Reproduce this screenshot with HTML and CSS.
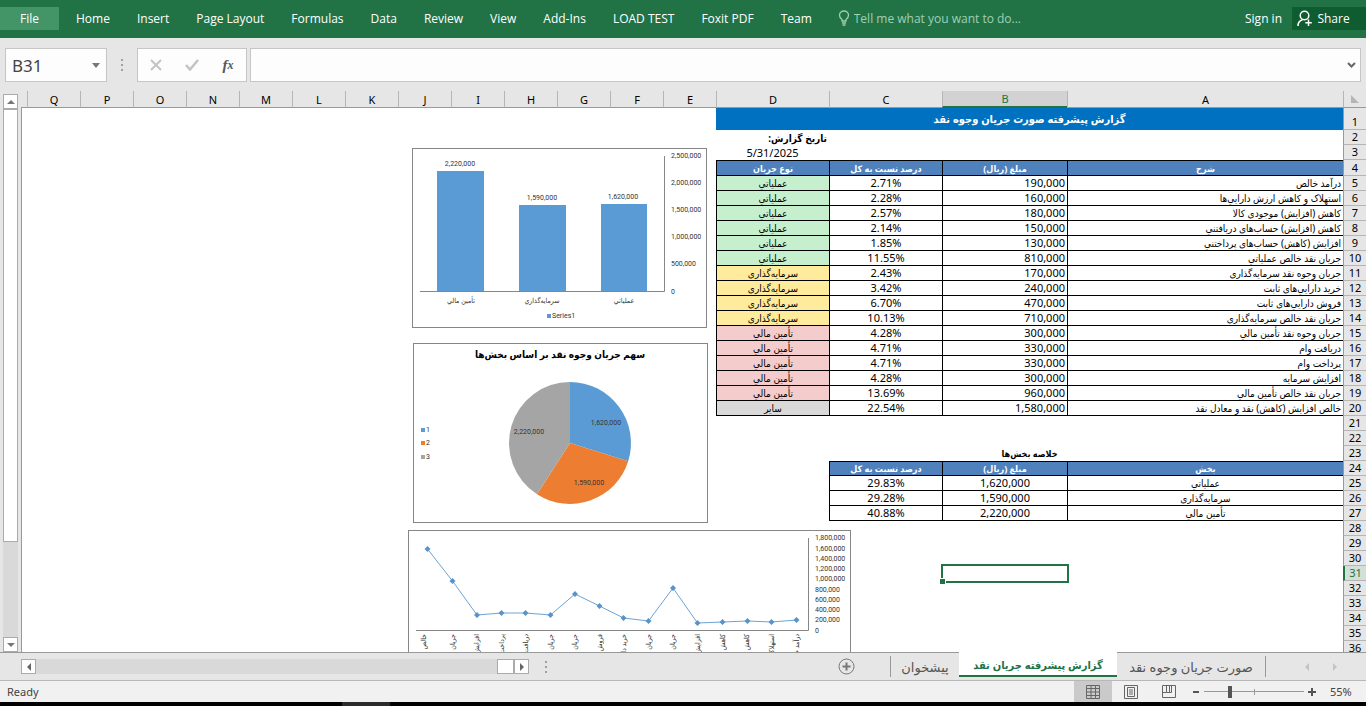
FILE: index.html
```html
<!DOCTYPE html>
<html lang="fa">
<head>
    <meta charset="UTF-8">
    <meta name="viewport" content="width=device-width, initial-scale=1.0">
    <title>گزارش پیشرفته جریان نقد</title>
    <link rel="stylesheet" href="styles.css">
</head>
<body>
    <!-- ribbon -->
    <header class="ribbon">
        <button class="file-btn">File</button>
        <nav class="ribbon-tabs">
            <a href="#">Home</a>
            <a href="#">Insert</a>
            <a href="#">Page Layout</a>
            <a href="#">Formulas</a>
            <a href="#">Data</a>
            <a href="#">Review</a>
            <a href="#">View</a>
            <a href="#">Add-Ins</a>
            <a href="#">LOAD TEST</a>
            <a href="#">Foxit PDF</a>
            <a href="#">Team</a>
        </nav>
        <label class="tell-me">
            <svg width="12" height="16" viewBox="0 0 12 16" fill="none" stroke="#9fd0b3" stroke-width="1.3">
                <path d="M4 11V9.500C2.500 8.500 1.500 7.200 1.500 5.300a4.500 4.300 0 0 1 9 0C10.500 7.200 9.500 8.500 8 9.500V11z"/>
                <path d="M4 13h4M4.500 15h3"/>
            </svg>
            <input type="text" placeholder="Tell me what you want to do..." aria-label="Tell me what you want to do">
        </label>
        <a class="sign-in" href="#">Sign in</a>
        <button class="share-btn">
            <svg width="16" height="17" viewBox="0 0 16 17" fill="none" stroke="#fff" stroke-width="1.500">
                <circle cx="7.500" cy="5.500" r="4.300"/>
                <path d="M1 16c0-3.500 1.800-5.500 4.500-6.300M11.500 9.500v6.500M8.300 12.800h6.500"/>
            </svg>
            Share
        </button>
    </header>

    <!-- formula bar -->
    <div class="formula-bar">
        <div class="name-box">
            <input type="text" value="B31" aria-label="Name box">
            <button aria-label="Open name list"><svg width="8" height="5" viewBox="0 0 8 5"><path d="M0 0h8L4 5z" fill="#777"/></svg></button>
        </div>
        <div class="dots"><i></i><i></i><i></i></div>
        <div class="fx-box">
            <button aria-label="Cancel"><svg width="12" height="12" viewBox="0 0 12 12"><path d="M1 1l10 10M11 1L1 11" stroke="#c3c3c3" stroke-width="2"/></svg></button>
            <button aria-label="Enter"><svg width="14" height="12" viewBox="0 0 14 12"><path d="M1 6l4 4.500L13 1" fill="none" stroke="#c3c3c3" stroke-width="2.500"/></svg></button>
            <button class="fx" aria-label="Insert function">f<sub>x</sub></button>
        </div>
        <div class="formula-input">
            <input type="text" aria-label="Formula">
            <button aria-label="Expand"><svg width="9" height="6" viewBox="0 0 9 6"><path d="M1 1l3.500 3.500L8 1" fill="none" stroke="#666" stroke-width="2"/></svg></button>
        </div>
    </div>

    <main class="workspace">
        <div class="v-scroll">
            <button aria-label="Scroll up"><svg width="8" height="4" viewBox="0 0 8 4"><path d="M0 4h8L4 0z" fill="#777"/></svg></button>
            <div class="v-thumb"></div>
            <div class="v-track"></div>
            <button aria-label="Scroll down"><svg width="8" height="4" viewBox="0 0 8 4"><path d="M0 0h8L4 4z" fill="#777"/></svg></button>
        </div>

        <div class="sheet" dir="rtl">
            <table class="grid">
                <colgroup>
                    <col class="c-num"><col class="c-a"><col class="c-b"><col class="c-c"><col class="c-d">
                    <col class="c-s" span="13"><col>
                </colgroup>
                <thead>
                    <tr>
                        <th class="corner"><svg width="8" height="8" viewBox="0 0 8 8"><path d="M0 0v8h8z" fill="#b5b5b5"/></svg></th>
                        <th>A</th><th class="on">B</th><th>C</th><th>D</th><th>E</th><th>F</th><th>G</th><th>H</th><th>I</th>
                        <th>J</th><th>K</th><th>L</th><th>M</th><th>N</th><th>O</th><th>P</th><th>Q</th><th></th>
                    </tr>
                </thead>
                <tbody>
                    <tr class="title-row"><th>1</th><td colspan="4" class="title">گزارش پیشرفته صورت جریان وجوه نقد</td><td colspan="14"></td></tr>
                    <tr><th>2</th><td colspan="3"></td><td class="bold">تاریخ گزارش:</td><td colspan="14"></td></tr>
                    <tr><th>3</th><td colspan="3"></td><td class="num mid">5/31/2025</td><td colspan="14"></td></tr>
                    <tr class="head first"><th>4</th><td>شرح</td><td>مبلغ (ریال)</td><td>درصد نسبت به کل</td><td>نوع جریان</td><td colspan="14"></td></tr>
                    <tr class="data"><th>5</th><td>درآمد خالص</td><td>190,000</td><td>2.71%</td><td class="green">عملیاتي</td><td colspan="14"></td></tr>
                    <tr class="data"><th>6</th><td>استهلاک و کاهش ارزش دارایي‌ها</td><td>160,000</td><td>2.28%</td><td class="green">عملیاتي</td><td colspan="14"></td></tr>
                    <tr class="data"><th>7</th><td>کاهش (افزایش) موجودی کالا</td><td>180,000</td><td>2.57%</td><td class="green">عملیاتي</td><td colspan="14"></td></tr>
                    <tr class="data"><th>8</th><td>کاهش (افزایش) حساب‌های دریافتني</td><td>150,000</td><td>2.14%</td><td class="green">عملیاتي</td><td colspan="14"></td></tr>
                    <tr class="data"><th>9</th><td>افزایش (کاهش) حساب‌های پرداختني</td><td>130,000</td><td>1.85%</td><td class="green">عملیاتي</td><td colspan="14"></td></tr>
                    <tr class="data"><th>10</th><td>جریان نقد خالص عملیاتي</td><td>810,000</td><td>11.55%</td><td class="green">عملیاتي</td><td colspan="14"></td></tr>
                    <tr class="data"><th>11</th><td>جریان وجوه نقد سرمایه‌گذاری</td><td>170,000</td><td>2.43%</td><td class="yellow">سرمایه‌گذاری</td><td colspan="14"></td></tr>
                    <tr class="data"><th>12</th><td>خرید دارایي‌های ثابت</td><td>240,000</td><td>3.42%</td><td class="yellow">سرمایه‌گذاری</td><td colspan="14"></td></tr>
                    <tr class="data"><th>13</th><td>فروش دارایي‌های ثابت</td><td>470,000</td><td>6.70%</td><td class="yellow">سرمایه‌گذاری</td><td colspan="14"></td></tr>
                    <tr class="data"><th>14</th><td>جریان نقد خالص سرمایه‌گذاری</td><td>710,000</td><td>10.13%</td><td class="yellow">سرمایه‌گذاری</td><td colspan="14"></td></tr>
                    <tr class="data"><th>15</th><td>جریان وجوه نقد تأمین مالي</td><td>300,000</td><td>4.28%</td><td class="pink">تأمین مالي</td><td colspan="14"></td></tr>
                    <tr class="data"><th>16</th><td>دریافت وام</td><td>330,000</td><td>4.71%</td><td class="pink">تأمین مالي</td><td colspan="14"></td></tr>
                    <tr class="data"><th>17</th><td>پرداخت وام</td><td>330,000</td><td>4.71%</td><td class="pink">تأمین مالي</td><td colspan="14"></td></tr>
                    <tr class="data"><th>18</th><td>افزایش سرمایه</td><td>300,000</td><td>4.28%</td><td class="pink">تأمین مالي</td><td colspan="14"></td></tr>
                    <tr class="data"><th>19</th><td>جریان نقد خالص تأمین مالي</td><td>960,000</td><td>13.69%</td><td class="pink">تأمین مالي</td><td colspan="14"></td></tr>
                    <tr class="data"><th>20</th><td>خالص افزایش (کاهش) نقد و معادل نقد</td><td>1,580,000</td><td>22.54%</td><td class="gray">سایر</td><td colspan="14"></td></tr>
                    <tr><th>21</th><td colspan="18"></td></tr>
                    <tr><th>22</th><td colspan="18"></td></tr>
                    <tr><th>23</th><td colspan="4" class="bold mid small">خلاصه بخش‌ها</td><td colspan="14"></td></tr>
                    <tr class="head"><th>24</th><td>بخش</td><td>مبلغ (ریال)</td><td>درصد نسبت به کل</td><td colspan="15"></td></tr>
                    <tr class="data sum"><th>25</th><td>عملیاتي</td><td>1,620,000</td><td>29.83%</td><td colspan="15"></td></tr>
                    <tr class="data sum"><th>26</th><td>سرمایه‌گذاری</td><td>1,590,000</td><td>29.28%</td><td colspan="15"></td></tr>
                    <tr class="data sum"><th>27</th><td>تأمین مالي</td><td>2,220,000</td><td>40.88%</td><td colspan="15"></td></tr>
                    <tr><th>28</th><td colspan="18"></td></tr>
                    <tr><th>29</th><td colspan="18"></td></tr>
                    <tr><th>30</th><td colspan="18"></td></tr>
                    <tr><th class="on">31</th><td></td><td class="active-cell"><div class="selection"></div></td><td colspan="16"></td></tr>
                    <tr><th>32</th><td colspan="18"></td></tr>
                    <tr><th>33</th><td colspan="18"></td></tr>
                    <tr><th>34</th><td colspan="18"></td></tr>
                    <tr><th>35</th><td colspan="18"></td></tr>
                    <tr><th>36</th><td colspan="18"></td></tr>
                </tbody>
            </table>

            <!-- floating charts -->
            <svg class="chart chart-bar" width="295" height="180" viewBox="0 0 295 180">
                <g fill="#5b9bd5">
                    <rect x="25" y="23" width="47" height="120"/>
                    <rect x="107" y="57" width="47" height="86"/>
                    <rect x="189" y="56" width="46" height="87"/>
                    <rect x="135" y="166" width="4" height="4"/>
                </g>
                <path d="M8 143.500h244.500V8" fill="none" stroke="#868686"/>
                <g text-anchor="middle">
                    <text x="48" y="18">2,220,000</text>
                    <text x="130" y="52">1,590,000</text>
                    <text x="211" y="51">1,620,000</text>
                    <text x="49" y="155">تأمين مالي</text>
                    <text x="130" y="155">سرمايه‌گذاري</text>
                    <text x="212" y="155">عملياتي</text>
                </g>
                <text x="140" y="170">Series1</text>
                <g>
                    <text x="259" y="10">2,500,000</text>
                    <text x="259" y="37">2,000,000</text>
                    <text x="259" y="64">1,500,000</text>
                    <text x="259" y="91">1,000,000</text>
                    <text x="259" y="118">500,000</text>
                    <text x="259" y="146">0</text>
                </g>
            </svg>

            <svg class="chart chart-pie" width="295" height="180" viewBox="0 0 295 180">
                <text class="chart-title" x="147" y="15" text-anchor="middle">سهم جریان وجوه نقد بر اساس بخش‌ها</text>
                <path d="M157 100V39a61 61 0 0 1 58.200 79.200z" fill="#5b9bd5"/>
                <path d="M157 100l58.200 18.200A61 61 0 0 1 124 151.300z" fill="#ed7d31"/>
                <path d="M157 100l-33 51.300A61 61 0 0 1 157 39z" fill="#a5a5a5"/>
                <rect x="8" y="85" width="4" height="4" fill="#5b9bd5"/>
                <rect x="8" y="98" width="4" height="4" fill="#ed7d31"/>
                <rect x="8" y="112" width="4" height="4" fill="#a5a5a5"/>
                <text x="13" y="89">1</text>
                <text x="13" y="102">2</text>
                <text x="13" y="116">3</text>
                <g text-anchor="middle">
                    <text x="193" y="82">1,620,000</text>
                    <text x="116" y="91">2,220,000</text>
                    <text x="176" y="142">1,590,000</text>
                </g>
            </svg>

            <svg class="chart chart-line" width="443" height="180" viewBox="0 0 443 180">
                <path d="M8 100.500h392.500V8" fill="none" stroke="#868686"/>
                <polyline fill="none" stroke="#6ea3d3" points="19.500,19 44.500,51 69,85 93.500,83 117.500,83 142.500,85 167,64 191.500,76 215.500,88 240.500,91 265,58 289.500,93 314.500,92 339.500,91 363.500,92 388.500,90"/>
                <path fill="#5b93c9" d="M19.500 16l3 3-3 3-3-3zM44.500 48l3 3-3 3-3-3zM69 82l3 3-3 3-3-3zM93.500 80l3 3-3 3-3-3zM117.500 80l3 3-3 3-3-3zM142.500 82l3 3-3 3-3-3zM167 61l3 3-3 3-3-3zM191.500 73l3 3-3 3-3-3zM215.500 85l3 3-3 3-3-3zM240.500 88l3 3-3 3-3-3zM265 55l3 3-3 3-3-3zM289.500 90l3 3-3 3-3-3zM314.500 89l3 3-3 3-3-3zM339.500 88l3 3-3 3-3-3zM363.500 89l3 3-3 3-3-3zM388.500 87l3 3-3 3-3-3z"/>
                <text x="407" y="10">1,800,000</text>
                <text x="407" y="21">1,600,000</text>
                <text x="407" y="31">1,400,000</text>
                <text x="407" y="41">1,200,000</text>
                <text x="407" y="51">1,000,000</text>
                <text x="407" y="62">800,000</text>
                <text x="407" y="72">600,000</text>
                <text x="407" y="82">400,000</text>
                <text x="407" y="92">200,000</text>
                <text x="407" y="103">0</text>
                <g class="axis-names">
                    <text transform="translate(18 104) rotate(-90)">خالص</text>
                    <text transform="translate(47 104) rotate(-90)">جریان نقد</text>
                    <text transform="translate(71 104) rotate(-90)">افزایش</text>
                    <text transform="translate(96 104) rotate(-90)">پرداخت</text>
                    <text transform="translate(120 104) rotate(-90)">دریافت</text>
                    <text transform="translate(145 104) rotate(-90)">جریان</text>
                    <text transform="translate(169 104) rotate(-90)">جریان</text>
                    <text transform="translate(194 104) rotate(-90)">فروش</text>
                    <text transform="translate(218 104) rotate(-90)">خرید دارایي‌ها</text>
                    <text transform="translate(243 104) rotate(-90)">جریان وجوه</text>
                    <text transform="translate(267 104) rotate(-90)">جریان نقد</text>
                    <text transform="translate(292 104) rotate(-90)">افزایش</text>
                    <text transform="translate(317 104) rotate(-90)">کاهش (افزایش)</text>
                    <text transform="translate(341 104) rotate(-90)">کاهش (افزایش)</text>
                    <text transform="translate(366 104) rotate(-90)">استهلاک</text>
                    <text transform="translate(391 104) rotate(-90)">درآمد خالص</text>
                </g>
            </svg>
        </div>
    </main>

    <!-- sheet tabs -->
    <div class="tab-bar">
        <div class="h-scroll">
            <button aria-label="Scroll left"><svg width="4" height="8" viewBox="0 0 4 8"><path d="M4 0v8L0 4z" fill="#666"/></svg></button>
            <div class="h-track"></div>
            <div class="h-thumb"></div>
            <button aria-label="Scroll right"><svg width="4" height="8" viewBox="0 0 4 8"><path d="M0 0v8l4-4z" fill="#666"/></svg></button>
        </div>
        <div class="dots"><i></i><i></i><i></i></div>
        <button class="add-sheet" aria-label="New sheet">
            <svg width="17" height="17" viewBox="0 0 17 17" fill="none" stroke="#777"><circle cx="8.500" cy="8.500" r="7.500"/><path d="M8.500 4.500v8M4.500 8.500h8" stroke-width="2"/></svg>
        </button>
        <nav class="sheet-tabs">
            <a href="#" class="t1">پیشخوان</a>
            <a href="#" class="t2">گزارش پیشرفته جریان نقد</a>
            <a href="#" class="t3">صورت جریان وجوه نقد</a>
        </nav>
        <div class="tab-arrows">
            <button aria-label="Previous sheet"><svg width="4" height="8" viewBox="0 0 4 8"><path d="M4 0v8L0 4z" fill="#c3c3c3"/></svg></button>
            <button aria-label="Next sheet"><svg width="4" height="8" viewBox="0 0 4 8"><path d="M0 0v8l4-4z" fill="#c3c3c3"/></svg></button>
        </div>
    </div>

    <footer class="status">
        <span class="ready">Ready</span>
        <button class="view on" aria-label="Normal view"><svg width="14" height="14" viewBox="0 0 14 14" fill="none" stroke="#666"><path d="M.5.5h13v13H.5zM.5 3.500h13M.5 7h13M.5 10.500h13M5 .5v13M9.500 .5v13"/></svg></button>
        <button class="view" aria-label="Page layout view"><svg width="14" height="14" viewBox="0 0 14 14" fill="none" stroke="#666"><path d="M.5.5h13v13H.5zM3.500 2.500h7v9h-7zM5 5h4M5 7h4M5 9h4"/></svg></button>
        <button class="view" aria-label="Page break view"><svg width="14" height="14" viewBox="0 0 14 14" fill="none" stroke="#666"><path d="M.5.5h13v12H.5zM4.500 .5v7h5v-7M7.500 .5v7M.5 7.500h4"/></svg></button>
        <button class="zoom-btn" aria-label="Zoom out"><svg width="8" height="8" viewBox="0 0 8 8"><path d="M1 4h6" stroke="#555" stroke-width="2"/></svg></button>
        <input type="range" class="zoom" min="0" max="100" value="25" aria-label="Zoom">
        <button class="zoom-btn" aria-label="Zoom in"><svg width="8" height="8" viewBox="0 0 8 8"><path d="M0 4h8M4 0v8" stroke="#555" stroke-width="2"/></svg></button>
        <span class="percent">55%</span>
    </footer>
    <div class="taskbar"><span></span></div>
</body>
</html>
```
FILE: styles.css
```css
*{
    margin: 0;
    padding: 0;
    box-sizing: border-box;
}
body{
    height: 100vh;
    display: flex;
    flex-direction: column;
    overflow: hidden;
    background-color: #e6e6e6;
    font-family: "Noto Sans", "DejaVu Sans", sans-serif;
    font-size: 12px;
    color: #000;
}
button, input{
    border: none;
    background: none;
    font: inherit;
    color: inherit;
    outline: none;
}
button{
    display: flex;
    align-items: center;
    justify-content: center;
}
a{
    color: inherit;
    text-decoration: none;
}

/* ribbon */
.ribbon{
    flex: none;
    height: 38px;
    padding-bottom: 2px;
    display: flex;
    align-items: center;
    background-color: #217346;
    color: #fff;
    font-family: "Open Sans", sans-serif;
    white-space: nowrap;
}
.file-btn{
    width: 59px;
    height: 23px;
    background-color: #439467;
}
.ribbon-tabs{
    display: flex;
    gap: 27px;
    margin-left: 17px;
}
.tell-me{
    flex: 1;
    display: flex;
    align-items: center;
    gap: 4px;
    margin-left: 26px;
}
.tell-me input{
    flex: 1;
    min-width: 0;
}
.tell-me input::placeholder{
    color: #9fd0b3;
}
.share-btn{
    width: 74px;
    height: 23px;
    margin-left: 10px;
    padding-right: 11px;
    gap: 4px;
    background-color: #0e5c2f;
}

/* formula bar */
.formula-bar{
    flex: none;
    display: flex;
    height: 53px;
    padding: 10px 5px 9px;
}
.name-box, .fx-box, .formula-input{
    display: flex;
    align-items: center;
    background-color: #fdfdfd;
    border: 1px solid #c6c6c6;
}
.name-box{
    width: 102px;
}
.name-box input{
    width: 86px;
    padding-left: 6px;
    font-size: 17px;
    color: #444;
}
.dots{
    width: 30px;
    display: flex;
    flex-direction: column;
    align-items: center;
    justify-content: center;
    gap: 3px;
}
.dots i{
    width: 2px;
    height: 2px;
    background-color: #a0a0a0;
}
.fx-box{
    width: 110px;
    margin-right: 3px;
}
.fx-box button{
    flex: 1;
}
.fx-box .fx{
    font: italic bold 15px "Liberation Serif", serif;
    color: #555;
}
.fx sub{
    font-size: 12px;
}
.formula-input{
    flex: 1;
}
.formula-input input{
    flex: 1;
}
.formula-input button{
    width: 17px;
}

/* sheet area */
.workspace{
    flex: 1;
    min-height: 0;
    display: flex;
}
.v-scroll{
    width: 21px;
    padding: 3px 3px 0;
    display: flex;
    flex-direction: column;
}
.v-scroll button{
    width: 15px;
    height: 15px;
    background-color: #fff;
    border: 1px solid #ababab;
}
.v-thumb{
    flex: 82;
    width: 15px;
    background-color: #fff;
    border: 1px solid #ababab;
}
.v-track{
    flex: 18;
    width: 15px;
    background-color: #d9d9d9;
}
.sheet{
    flex: 1;
    position: relative;
    overflow: hidden;
}
.grid{
    width: 100%;
    table-layout: fixed;
    border-collapse: separate;
    border-spacing: 0;
    font-family: "Noto Sans", "DejaVu Sans Condensed", "DejaVu Sans", sans-serif;
    font-size: 11px;
    line-height: 14px;
}
.c-num{
    width: 23px;
}
.c-a{
    width: 276px;
}
.c-b{
    width: 125px;
}
.c-c, .c-d{
    width: 113px;
}
.c-s{
    width: 53px;
}
.grid th, .grid td{
    white-space: nowrap;
}
.grid thead th{
    height: 17px;
    font-weight: normal;
    font-size: 11px;
    line-height: 15px;
    border-bottom: 1px solid #999;
    border-left: 1px solid #b5b5b5;
}
.grid thead th:last-child{
    border-left: none;
}
.grid thead th.on{
    background-color: #d2d2d2;
    border-bottom: 2px solid #217346;
    color: #217346;
}
.corner svg{
    display: block;
    margin: 0 auto;
}
.grid tbody th{
    height: 15px;
    font-weight: normal;
    font-size: 11px;
    border-left: 1px solid #999;
    border-bottom: 1px solid #b5b5b5;
}
.grid tbody th.on{
    background-color: #d3e0d7;
    border-left: 2px solid #217346;
    color: #217346;
}
.grid td{
    padding: 0 2px;
    background-color: #fff;
    text-align: right;
}
.grid td:last-child{
    border-left: 1px solid #999;
}
.grid .title-row th{
    height: 22px;
    vertical-align: bottom;
}
.grid td.title{
    background-color: #0070c0;
    color: #fff;
    font-weight: bold;
    font-size: 11px;
    text-align: center;
}
.grid td.bold{
    font-weight: bold;
    font-size: 10px;
}
.grid td.small{
    font-size: 9px;
}
.grid td.mid{
    text-align: center;
}

/* bordered rows */
.head td:not(:last-child){
    border-left: 1px solid #000;
    border-top: 1px solid #000;
    border-bottom: 1px solid #000;
    background-color: #4f81bd;
    color: #fff;
    font-weight: bold;
    font-size: 9px;
    line-height: 13px;
    text-align: center;
}
.grid .first th{
    height: 16px;
}
.data td:not(:last-child){
    border-left: 1px solid #000;
    border-bottom: 1px solid #000;
    text-align: center;
}
.data td:nth-child(2), .data td:nth-child(5){
    font-size: 10px;
}
.data:not(.sum) td:nth-child(2), .data:not(.sum) td:nth-child(3){
    text-align: right;
}
.grid .green{
    background-color: #c6efce;
}
.grid .yellow{
    background-color: #ffeb9c;
}
.grid .pink{
    background-color: #f4cccc;
}
.grid .gray{
    background-color: #d9d9d9;
}
.grid .active-cell{
    position: relative;
}
.selection{
    position: absolute;
    inset: -2px -2px -2px -1px;
    border: 2px solid #217346;
}
.selection::after{
    content: "";
    position: absolute;
    left: -3px;
    bottom: -3px;
    width: 5px;
    height: 5px;
    background-color: #217346;
    outline: 1px solid #fff;
}

/* charts lie over the cells */
.chart{
    position: absolute;
    direction: ltr;
    background-color: #fff;
    outline: 1px solid #868686;
    outline-offset: -1px;
    font-family: Roboto, "DejaVu Sans Condensed", "DejaVu Sans", sans-serif;
    font-size: 7px;
    fill: #333;
}
.chart-bar{
    top: 57px;
    right: 659px;
}
.chart-pie{
    top: 252px;
    right: 658px;
}
.chart-line{
    top: 439px;
    right: 515px;
}
.chart-title{
    font-weight: bold;
    font-size: 10px;
    fill: #000;
}
.axis-names{
    direction: rtl;
}

/* sheet tabs */
.tab-bar{
    flex: none;
    display: flex;
    height: 28px;
    border-top: 1px solid #999;
    color: #555;
}
.h-scroll{
    flex: 1;
    display: flex;
    align-items: center;
    margin-left: 21px;
}
.h-scroll button{
    width: 15px;
    height: 15px;
    background-color: #fff;
    border: 1px solid #ababab;
}
.h-track{
    flex: 1;
    height: 15px;
    background-color: #d9d9d9;
}
.h-thumb{
    width: 17px;
    height: 15px;
    background-color: #fff;
    border: 1px solid #ababab;
}
.tab-bar .dots{
    width: 34px;
}
.add-sheet{
    width: 17px;
    margin-left: 275px;
}
.sheet-tabs{
    display: flex;
    margin-left: 35px;
    font-size: 13px;
}
.sheet-tabs a{
    display: flex;
    align-items: center;
    justify-content: center;
    white-space: nowrap;
}
.sheet-tabs .t1{
    width: 69px;
    margin: 3px 0;
    border-left: 1px solid #999;
}
.sheet-tabs .t2{
    width: 158px;
    margin: -1px 0 3px;
    padding-top: 2px;
    background-color: #fff;
    border-bottom: 2px solid #217346;
    color: #217346;
    font-family: "Noto Sans", "DejaVu Sans Condensed", "DejaVu Sans", sans-serif;
    font-weight: bold;
    font-size: 11px;
}
.sheet-tabs .t3{
    width: 149px;
    margin: 3px 0;
    border-right: 1px solid #999;
}
.tab-arrows{
    width: 100px;
    padding-left: 39px;
    display: flex;
    align-items: center;
    gap: 24px;
}

/* status bar */
.status{
    flex: none;
    display: flex;
    align-items: center;
    height: 22px;
    border-top: 1px solid #b8b8b8;
    background-color: #f1f1f1;
    font-size: 11px;
    color: #444;
}
.ready{
    flex: 1;
    padding-left: 7px;
}
.view{
    width: 38px;
    height: 21px;
}
.view.on{
    background-color: #cacaca;
}
.zoom-btn{
    width: 8px;
    height: 20px;
}
.view + .zoom-btn{
    margin-left: 4px;
}
.zoom{
    appearance: none;
    width: 100px;
    height: 14px;
    margin: 0 4px;
    background: linear-gradient(#999, #999) center / 100% 1px no-repeat, linear-gradient(#999, #999) center / 1px 6px no-repeat;
}
.zoom::-webkit-slider-thumb{
    appearance: none;
    width: 4px;
    height: 12px;
    background-color: #555;
}
.percent{
    width: 50px;
    padding-left: 14px;
}
.taskbar{
    flex: none;
    height: 4px;
    background-color: #000;
}
.taskbar span{
    display: block;
    width: 48px;
    height: 4px;
    margin-left: 342px;
    background-color: #2b2b2b;
}
```
